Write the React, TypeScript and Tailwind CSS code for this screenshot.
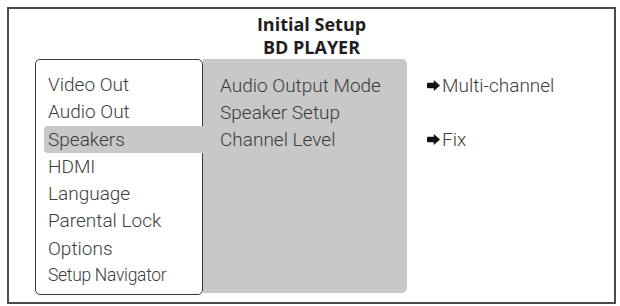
import React from "react";

const font = { fontFamily: "Roboto, 'Liberation Sans', sans-serif" };

function Arrow() {
  return (
    <svg width="13" height="11" viewBox="0 0 13 11" className="mr-[2px] inline-block">
      <path d="M1 2.8h5.8V0L13 5.5 6.8 11V8.2H1a1 1 0 0 1-1-1V3.8a1 1 0 0 1 1-1z" fill="#111" />
    </svg>
  );
}

const menuItems = [
  "Video Out",
  "Audio Out",
  "Speakers",
  "HDMI",
  "Language",
  "Parental Lock",
  "Options",
];

const subItems = ["Audio Output Mode", "Speaker Setup", "Channel Level"];

export default function App() {
  return (
    <div className="h-[306px] w-[620px] bg-white pl-[7px] pt-[7px]" style={font}>
      <div className="h-[297px] w-[609px] border-2 border-[#4a4a4a]">
        <div
          className="pt-[4px] text-center text-[18px] font-bold leading-[23px] text-[#1e1e1e]"
          style={{ fontFamily: "'Open Sans', 'Noto Sans', sans-serif" }}
        >
          <div>Initial Setup</div>
          <div>BD PLAYER</div>
        </div>

        <div className="flex pl-[26px]">
          {/* Main menu */}
          <div className="h-[236px] w-[168px] rounded-[5px] border-[1.5px] border-[#3a3a3a] pl-[8px] pt-[11px] text-[19px] font-light leading-[27.3px] text-[#3c3c3c]">
            {menuItems.map((item) =>
              item === "Speakers" ? (
                <div
                  key={item}
                  className="-mr-[2px] rounded-l-[4px] bg-[#c8c8c8] pl-[4px]"
                >
                  {item}
                </div>
              ) : (
                <div key={item} className="pl-[4px]">
                  {item}
                </div>
              ),
            )}
            <div className="pl-[4px] text-[17.5px] tracking-[-0.3px]">Setup Navigator</div>
          </div>

          {/* Sub menu */}
          <div className="h-[234px] w-[204px] rounded-r-[5px] bg-[#c8c8c8] pl-[17px] pt-[12.5px] text-[19px] font-light leading-[27.3px] text-[#3c3c3c]">
            {subItems.map((item) => (
              <div key={item}>{item}</div>
            ))}
          </div>

          {/* Values */}
          <div className="pl-[20px] pt-[12.5px] text-[19px] font-light leading-[27.3px] text-[#3c3c3c]">
            <div className="flex items-center">
              <Arrow />
              Multi-channel
            </div>
            <div>&nbsp;</div>
            <div className="flex items-center">
              <Arrow />
              Fix
            </div>
          </div>
        </div>
      </div>
    </div>
  );
}
